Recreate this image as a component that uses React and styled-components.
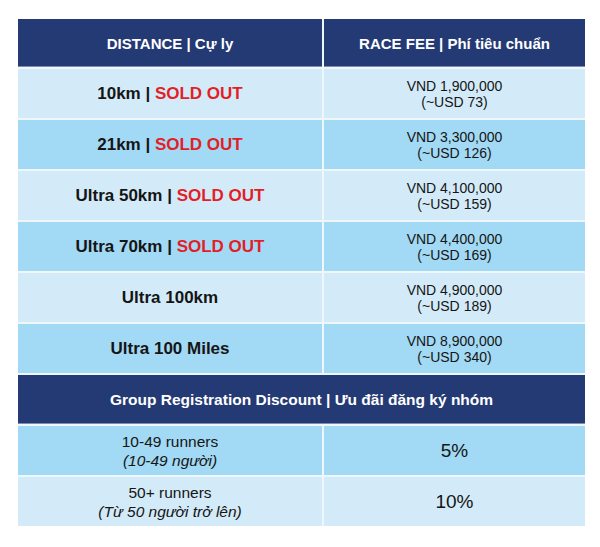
import { Fragment } from "react";
import styled, { createGlobalStyle } from "styled-components";

const Global = createGlobalStyle`
  body {
    margin: 0;
    background: #ffffff;
    font-family: "Liberation Sans", Arial, sans-serif;
  }
`;

const Page = styled.div`
  padding: 19px 15px 19px 18px;
`;

const Table = styled.div`
  width: 567px;
  display: grid;
  grid-template-columns: 304px 1fr;
  gap: 2px;
  background: #eef7fc;
`;

const Head = styled.div`
  grid-column: ${(p) => (p.$wide ? "1 / -1" : "auto")};
  height: ${(p) => (p.$wide ? 49 : 48)}px;
  background: #243a74;
  color: #ffffff;
  font-weight: bold;
  font-size: ${(p) => (p.$wide ? 15.5 : 15)}px;
  display: flex;
  align-items: center;
  justify-content: center;
  box-shadow: inset 0 -1px 0 #7d8bb0;
`;

const Cell = styled.div`
  height: 49px;
  background: ${(p) => (p.$dark ? "#a2d9f4" : "#d3ebf8")};
  color: #151515;
  display: flex;
  flex-direction: column;
  align-items: center;
  justify-content: center;
  text-align: center;
`;

const Distance = styled.span`
  font-weight: bold;
  font-size: 17px;
`;

const Sold = styled.span`
  color: #e31e27;
`;

const Fee = styled.span`
  font-size: 14px;
  line-height: 16px;
`;

const Runners = styled.span`
  font-size: 15.5px;
  line-height: 19px;
  font-style: ${(p) => (p.$vi ? "italic" : "normal")};
`;

const Percent = styled.span`
  font-size: 19px;
`;

const races = [
  { name: "10km", sold: true, vnd: "1,900,000", usd: "73" },
  { name: "21km", sold: true, vnd: "3,300,000", usd: "126" },
  { name: "Ultra 50km", sold: true, vnd: "4,100,000", usd: "159" },
  { name: "Ultra 70km", sold: true, vnd: "4,400,000", usd: "169" },
  { name: "Ultra 100km", sold: false, vnd: "4,900,000", usd: "189" },
  { name: "Ultra 100 Miles", sold: false, vnd: "8,900,000", usd: "340" },
];

const groups = [
  { en: "10-49 runners", vi: "(10-49 người)", pct: "5%" },
  { en: "50+ runners", vi: "(Từ 50 người trở lên)", pct: "10%" },
];

export default function App() {
  return (
    <>
      <Global />
      <Page>
        <Table>
          <Head>DISTANCE | Cự ly</Head>
          <Head>RACE FEE | Phí tiêu chuẩn</Head>
          {races.map((r, i) => (
            <Fragment key={r.name}>
              <Cell $dark={i % 2 === 1}>
                <Distance>
                  {r.name}
                  {r.sold && (
                    <>
                      {" | "}
                      <Sold>SOLD OUT</Sold>
                    </>
                  )}
                </Distance>
              </Cell>
              <Cell $dark={i % 2 === 1}>
                <Fee>VND {r.vnd}</Fee>
                <Fee>(~USD {r.usd})</Fee>
              </Cell>
            </Fragment>
          ))}
          <Head $wide>Group Registration Discount | Ưu đãi đăng ký nhóm</Head>
          {groups.map((g, i) => (
            <Fragment key={g.en}>
              <Cell $dark={i === 0}>
                <Runners>{g.en}</Runners>
                <Runners $vi>{g.vi}</Runners>
              </Cell>
              <Cell $dark={i === 0}>
                <Percent>{g.pct}</Percent>
              </Cell>
            </Fragment>
          ))}
        </Table>
      </Page>
    </>
  );
}
